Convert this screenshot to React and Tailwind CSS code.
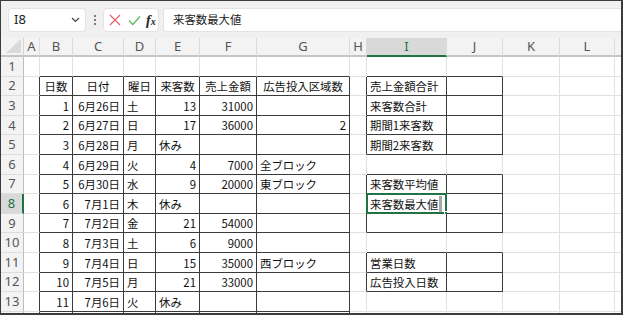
import React from 'react';

const COLS = ['A','B','C','D','E','F','G','H','I','J','K','L','M'];
const T1 = ['B','C','D','E','F','G'];

const DATA = {
  2: { B:['日数','c'], C:['日付','c'], D:['曜日','c'], E:['来客数','c'], F:['売上金額','c'], G:['広告投入区域数','c'], I:['売上金額合計','l'] },
  3: { B:['1','r'], C:['6月26日','r'], D:['土','l'], E:['13','r'], F:['31000','r'], I:['来客数合計','l'] },
  4: { B:['2','r'], C:['6月27日','r'], D:['日','l'], E:['17','r'], F:['36000','r'], G:['2','r'], I:['期間1来客数','l'] },
  5: { B:['3','r'], C:['6月28日','r'], D:['月','l'], E:['休み','l'], I:['期間2来客数','l'] },
  6: { B:['4','r'], C:['6月29日','r'], D:['火','l'], E:['4','r'], F:['7000','r'], G:['全ブロック','l'] },
  7: { B:['5','r'], C:['6月30日','r'], D:['水','l'], E:['9','r'], F:['20000','r'], G:['東ブロック','l'], I:['来客数平均値','l'] },
  8: { B:['6','r'], C:['7月1日','r'], D:['木','l'], E:['休み','l'], I:['来客数最大値','l'] },
  9: { B:['7','r'], C:['7月2日','r'], D:['金','l'], E:['21','r'], F:['54000','r'] },
  10: { B:['8','r'], C:['7月3日','r'], D:['土','l'], E:['6','r'], F:['9000','r'] },
  11: { B:['9','r'], C:['7月4日','r'], D:['日','l'], E:['15','r'], F:['35000','r'], G:['西ブロック','l'], I:['営業日数','l'] },
  12: { B:['10','r'], C:['7月5日','r'], D:['月','l'], E:['21','r'], F:['33000','r'], I:['広告投入日数','l'] },
  13: { B:['11','r'], C:['7月6日','r'], D:['火','l'], E:['休み','l'] },
};

const T2ROWS = [2,3,4,5,7,8,9,11,12];

function darkRight(r, c) {
  if (r >= 2 && ['A','B','C','D','E','F','G'].includes(c)) return true;
  if (T2ROWS.includes(r) && ['H','I','J'].includes(c)) return true;
  return false;
}
function darkBottom(r, c) {
  if (r >= 1 && T1.includes(c)) return true;
  if (r >= 1 && r <= 12 && ['I','J'].includes(c)) return true;
  return false;
}

function Cell({ r, c }) {
  const d = DATA[r] && DATA[r][c];
  const right = darkRight(r, c) ? 'border-r-[#3a3a3a]' : 'border-r-[#e1e1e1]';
  const bottom = darkBottom(r, c) ? 'border-b-[#3a3a3a]' : 'border-b-[#e1e1e1]';
  const align = d ? (d[1] === 'r' ? 'justify-end' : d[1] === 'c' ? 'justify-center' : 'justify-start') : '';
  const selected = r === 8 && c === 'I';
  return (
    <div className={`relative flex items-center overflow-visible whitespace-nowrap border-r border-b bg-white px-[3px] pt-[2px] text-[11.4px] leading-none text-[#111] ${right} ${bottom} ${align}`}>
      {d ? <span>{d[0]}</span> : null}
      {selected ? (
        <>
          <div className="ml-[1px] h-full w-[3px] bg-[#a8a8a8]" />
          <div className="pointer-events-none absolute left-[-1px] top-[-1px] right-[-1px] bottom-[-1px] border-2 border-[#217346]" />
          <div className="absolute right-[-4px] bottom-[-4px] h-[6px] w-[6px] border border-white bg-[#217346]" />
        </>
      ) : null}
    </div>
  );
}

export default function App() {
  const rowNums = [1,2,3,4,5,6,7,8,9,10,11,12,13,14];
  return (
    <div className="h-[315px] w-[623px] overflow-hidden border-t border-l border-r-2 border-b-2 border-[#3c3c3c] bg-[#f0f0f0]" style={{ fontFamily: '"Noto Sans CJK JP", "Noto Sans", sans-serif' }}>
      {/* formula bar */}
      <div className="flex h-[37px] items-start gap-0 pt-[7px] pl-[7px]">
        <div className="flex h-[24px] w-[78px] items-center justify-between rounded-[4px] border border-[#e3e3e3] bg-white pl-[5px] pr-[5px]">
          <span className="text-[13px] text-[#222]" style={{ fontFamily: '"Noto Sans", sans-serif' }}>I8</span>
          <svg width="9" height="6" viewBox="0 0 9 6"><path d="M1 1 L4.5 4.5 L8 1" fill="none" stroke="#444" strokeWidth="1.2" /></svg>
        </div>
        <div className="flex h-[24px] w-[17px] flex-col items-center justify-center gap-[2px]">
          <div className="h-[2px] w-[2px] rounded-full bg-[#555]" />
          <div className="h-[2px] w-[2px] rounded-full bg-[#555]" />
          <div className="h-[2px] w-[2px] rounded-full bg-[#555]" />
        </div>
        <div className="flex h-[24px] w-[56px] items-center rounded-[4px] border border-[#e3e3e3] bg-white pl-[5px]">
          <svg width="12" height="12" viewBox="0 0 12 12" className="mr-[7px]"><path d="M1 1 L11 11 M11 1 L1 11" stroke="#e06666" strokeWidth="1.3" /></svg>
          <svg width="13" height="11" viewBox="0 0 13 11" className="mr-[5px]"><path d="M1 5.5 L4.8 9.5 L12 1.5" fill="none" stroke="#5fb760" strokeWidth="1.3" /></svg>
          <span className="text-[14px] font-bold italic text-[#222]" style={{ fontFamily: '"Liberation Serif", serif' }}>f<span className="text-[10px]">x</span></span>
        </div>
        <div className="ml-[4px] flex h-[24px] flex-1 items-center rounded-l-[4px] border border-r-0 border-[#e3e3e3] bg-white pl-[9px]">
          <span className="text-[11.4px] text-[#222]">来客数最大値</span>
        </div>
      </div>
      {/* sheet */}
      <div className="grid grid-cols-[23px_16px_33px_51px_32px_44px_57px_93px_17px_80px_56px_57px_55px_60px] grid-rows-[19px_repeat(14,19.6px)]">
        {/* header row */}
        <div className="relative border-r border-b-2 border-r-[#d4d4d4] border-b-[#c4c4c4] bg-[#f3f3f3]">
          <svg className="absolute right-[2px] bottom-[2px]" width="15" height="14" viewBox="0 0 15 14"><polygon points="15,0 15,14 0,14" fill="#dadada" /></svg>
        </div>
        {COLS.map((c) => (
          <div
            key={c}
            className={`flex items-center justify-center border-r border-b-2 text-[13px] leading-none ${c === 'I' ? 'bg-[#d9d9d9] border-b-[#217346] text-[#217346]' : 'bg-[#f3f3f3] border-b-[#c4c4c4] text-[#555]'} border-r-[#dcdcdc]`}
            style={{ fontFamily: '"Noto Sans", sans-serif' }}
          >
            {c === 'M' ? '' : c}
          </div>
        ))}
        {rowNums.map((r) => (
          <React.Fragment key={r}>
            <div
              className={`flex items-center justify-center border-b text-[13px] leading-none ${r === 8 ? 'bg-[#d9d9d9] border-r-2 border-r-[#217346] text-[#217346]' : 'bg-[#f3f3f3] border-r border-r-[#bdbdbd] text-[#555]'} border-b-[#dcdcdc]`}
              style={{ fontFamily: '"Noto Sans", sans-serif' }}
            >
              {r === 14 ? '' : r}
            </div>
            {COLS.map((c) => (
              <Cell key={c} r={r} c={c} />
            ))}
          </React.Fragment>
        ))}
      </div>
    </div>
  );
}
